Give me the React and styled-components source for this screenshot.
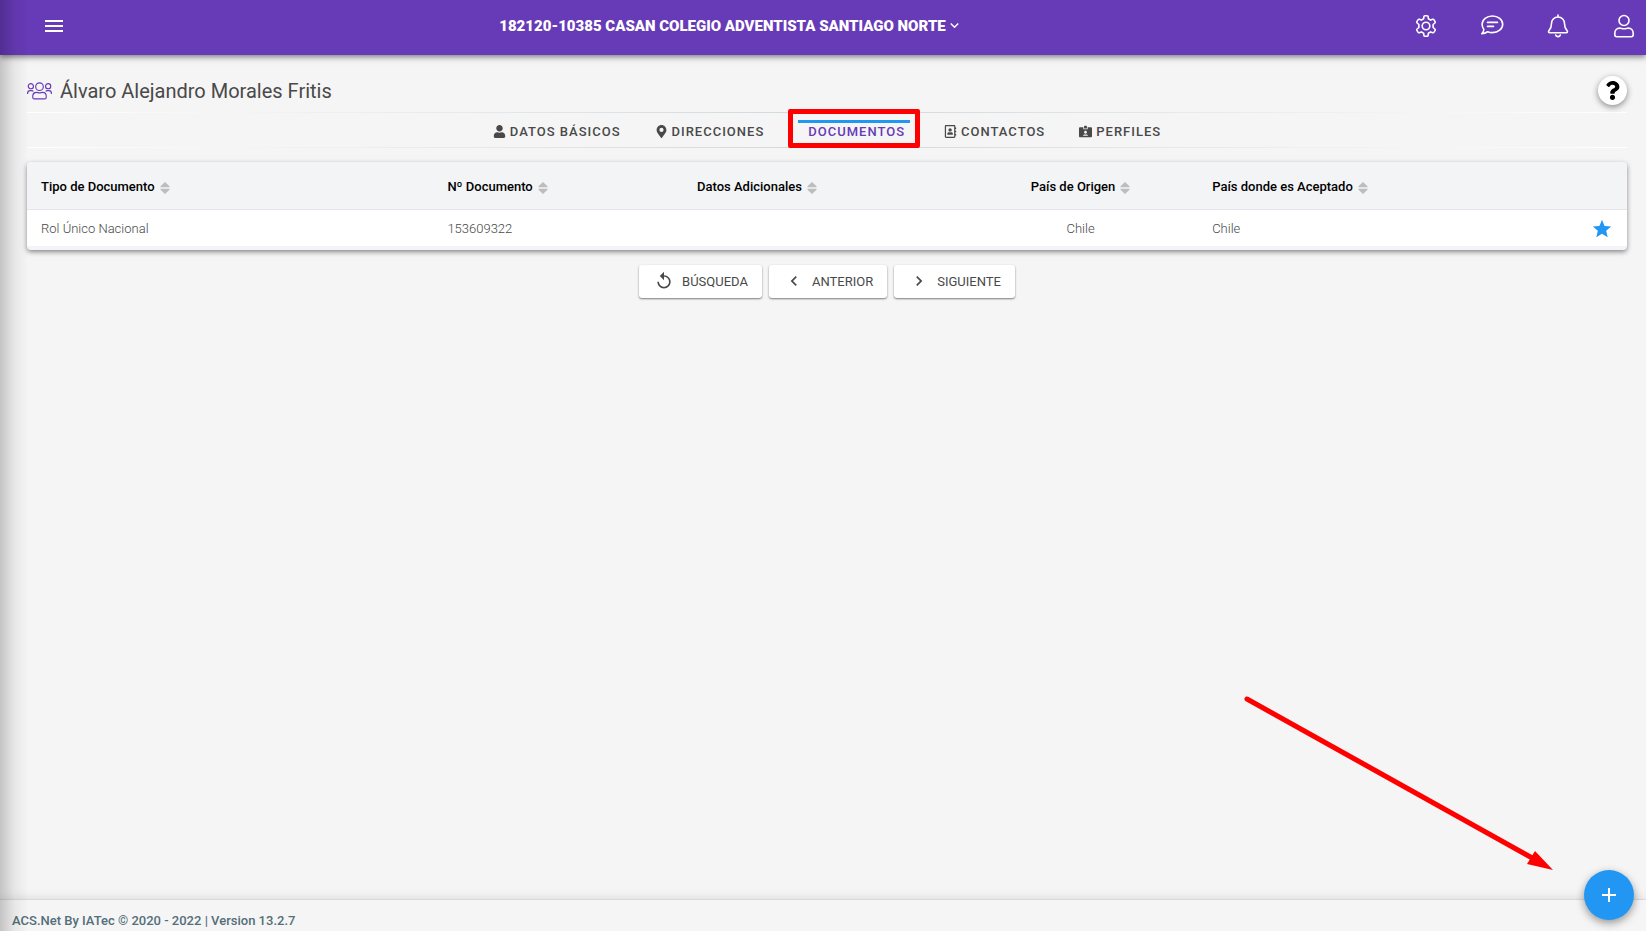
import { useState } from 'react'

// styled
import styled, { createGlobalStyle, ThemeProvider } from 'styled-components'

// icons
import {
  FaUser,
  FaMapMarkerAlt,
  FaRegAddressBook,
  FaIdCardAlt,
  FaQuestion,
} from 'react-icons/fa'
import {
  MdMenu,
  MdExpandMore,
  MdReplay,
  MdChevronLeft,
  MdChevronRight,
  MdAdd,
  MdStar,
} from 'react-icons/md'

const theme = {
  colors: {
    primary: '#673ab7',
    accent: '#2196f3',
    page: '#f5f5f5',
    text: '#494949',
    mark: '#ff0000',
  },
}

const tabs = [
  { id: 'datos', label: 'Datos Básicos', icon: FaUser },
  { id: 'direcciones', label: 'Direcciones', icon: FaMapMarkerAlt },
  { id: 'documentos', label: 'Documentos' },
  { id: 'contactos', label: 'Contactos', icon: FaRegAddressBook },
  { id: 'perfiles', label: 'Perfiles', icon: FaIdCardAlt },
]

const columns = [
  { key: 'tipo', label: 'Tipo de Documento', width: '25.4%' },
  { key: 'numero', label: 'Nº Documento', width: '15.6%' },
  { key: 'datos', label: 'Datos Adicionales', width: '17.5%' },
  { key: 'origen', label: 'País de Origen', width: '14.7%', align: 'center' },
  { key: 'aceptado', label: 'País donde es Aceptado', width: '17%' },
]

const documents = [
  {
    tipo: 'Rol Único Nacional',
    numero: '153609322',
    datos: '',
    origen: 'Chile',
    aceptado: 'Chile',
  },
]

function GearIcon() {
  return (
    <LineIcon viewBox="0 0 24 24">
      <circle cx="12" cy="12" r="3.8" />
      <path d="M9.900 2.600q.1-.9 1-.9h2.200q.9 0 1 .9l.3 2.200 2.200 1.300 2.100-.8q.8-.3 1.300.5l1.100 1.900q.4.8-.2 1.300l-1.800 1.500v3l1.800 1.500q.6.500.2 1.300l-1.100 1.900q-.5.800-1.300.5l-2.100-.8-2.200 1.300-.3 2.200q-.1.900-1 .9h-2.200q-.9 0-1-.9l-.3-2.200-2.200-1.300-2.100.8q-.8.300-1.300-.5l-1.100-1.900q-.4-.8.2-1.300l1.800-1.500v-3L3.100 9q-.6-.5-.2-1.300L4 5.800q.5-.8 1.300-.5l2.100.8 2.200-1.300z" />
    </LineIcon>
  )
}

function ChatIcon() {
  return (
    <LineIcon viewBox="0 0 24 24">
      <path d="M12.400 2c5.700 0 10.300 3.600 10.300 8.300s-4.600 8.300-10.300 8.300c-1.700 0-3.300-.3-4.700-.9-1.500 1.200-3.600 2-5.900 2 1.100-1.200 1.900-2.600 2.100-4.200-1.100-1.500-1.800-3.300-1.800-5.200 0-4.700 4.600-8.300 10.300-8.300z" />
      <path d="M7.500 8.400h10M7.500 12.400h6" />
    </LineIcon>
  )
}

function BellIcon() {
  return (
    <LineIcon viewBox="0 0 24 24">
      <path d="M12 1v2M12 3c-4 0-6.500 3-6.500 6.500 0 4.500-1.300 5.800-2.600 7.200-.8.900-.2 2 .9 2h16.400c1.100 0 1.700-1.100.9-2-1.300-1.400-2.600-2.700-2.600-7.200C18.500 6 16 3 12 3z" />
      <path d="M9.700 21c.3 1 1.200 1.600 2.300 1.600s2-.6 2.300-1.600" />
    </LineIcon>
  )
}

function PersonIcon() {
  return (
    <LineIcon viewBox="0 0 24 24">
      <circle cx="12" cy="6.500" r="5" />
      <path d="M7.800 14.100c1.500 0 2.200.7 4.200.7s2.700-.7 4.200-.7c3 0 5 2.300 5 5.100v1.600c0 1.100-.8 1.900-1.900 1.900H4.700c-1.100 0-1.900-.8-1.900-1.900v-1.600c0-2.800 2-5.100 5-5.100z" />
    </LineIcon>
  )
}

function PeopleIcon() {
  return (
    <PeopleSvg viewBox="0 0 26 20">
      <circle cx="13" cy="5.500" r="4" />
      <circle cx="4" cy="5" r="2.700" />
      <circle cx="22" cy="5" r="2.700" />
      <path d="M10 11.500c1 0 1.500.5 3 .5s2-.5 3-.5c2.500 0 4 1.700 4 4v1.200c0 .9-.6 1.500-1.500 1.500h-11c-.9 0-1.500-.6-1.500-1.500v-1.200c0-2.300 1.500-4 4-4z" />
      <path d="M.6 13v-.5c0-1.700 1-2.900 2.700-2.900h1.400c.8 0 1.400.2 1.900.7M25.400 13v-.5c0-1.700-1-2.900-2.700-2.900h-1.400c-.8 0-1.400.2-1.900.7" />
    </PeopleSvg>
  )
}

function SortIcon() {
  return (
    <SortSvg viewBox="0 0 10 12">
      <path d="M5 0l4.500 4.200v1H.5v-1zM5 12L.5 7.800v-1h9v1z" />
    </SortSvg>
  )
}

export default function App() {
  const [active, setActive] = useState('documentos')

  return (
    <ThemeProvider theme={theme}>
      <GlobalStyle />
      <Page>
        <Header>
          <IconButton aria-label="Menú">
            <MdMenu size={24} />
          </IconButton>
          <Entity>
            182120-10385 CASAN COLEGIO ADVENTISTA SANTIAGO NORTE
            <MdExpandMore size={17} />
          </Entity>
          <Actions>
            <IconButton aria-label="Configuración">
              <GearIcon />
            </IconButton>
            <IconButton aria-label="Mensajes">
              <ChatIcon />
            </IconButton>
            <IconButton aria-label="Notificaciones">
              <BellIcon />
            </IconButton>
            <IconButton aria-label="Cuenta">
              <PersonIcon />
            </IconButton>
          </Actions>
        </Header>

        <Main>
          <TitleBar>
            <PeopleIcon />
            <Title>Álvaro Alejandro Morales Fritis</Title>
            <Help aria-label="Ayuda">
              <FaQuestion size={19} />
            </Help>
          </TitleBar>

          <Tabs>
            {tabs.map(({ id, label, icon: Icon }) => (
              <Tab
                key={id}
                $active={id === active}
                onClick={() => setActive(id)}
              >
                {Icon && <Icon size={13} />}
                {label}
                {id === 'documentos' && <Highlight />}
              </Tab>
            ))}
          </Tabs>

          <Card>
            <Table>
              <thead>
                <tr>
                  {columns.map((col) => (
                    <Th key={col.key} $width={col.width} $align={col.align}>
                      {col.label}
                      <SortIcon />
                    </Th>
                  ))}
                  <Th />
                </tr>
              </thead>
              <tbody>
                {documents.map((doc) => (
                  <tr key={doc.numero}>
                    {columns.map((col) => (
                      <Td key={col.key} $align={col.align}>
                        {doc[col.key]}
                      </Td>
                    ))}
                    <Td $align="right">
                      <Star aria-label="Documento principal">
                        <MdStar size={22} />
                      </Star>
                    </Td>
                  </tr>
                ))}
              </tbody>
            </Table>
          </Card>

          <Pager>
            <PagerButton>
              <MdReplay size={20} />
              Búsqueda
            </PagerButton>
            <PagerButton>
              <MdChevronLeft size={20} />
              Anterior
            </PagerButton>
            <PagerButton>
              <MdChevronRight size={20} />
              Siguiente
            </PagerButton>
          </Pager>
        </Main>

        <Footer>ACS.Net By IATec © 2020 - 2022 | Version 13.2.7</Footer>

        <DrawerShadow />
        <Arrow viewBox="0 0 310 176">
          <path d="M3 3L290 163" />
          <polygon points="291,155 309,174 283,168" />
        </Arrow>
        <AddButton aria-label="Agregar">
          <MdAdd size={24} />
        </AddButton>
      </Page>
    </ThemeProvider>
  )
}

const GlobalStyle = createGlobalStyle`
  * {
    box-sizing: border-box;
  }
  body {
    margin: 0;
    background-color: ${theme.colors.page};
    color: ${theme.colors.text};
    font-family: Roboto, 'Liberation Sans', sans-serif;
    font-size: 13px;
  }
  button {
    padding: 0;
    border: 0;
    background: none;
    color: inherit;
    font: inherit;
    cursor: pointer;
  }
`
const Page = styled.div`
  display: flex;
  flex-direction: column;
  min-height: 100vh;
`
const Header = styled.header`
  display: grid;
  grid-template-columns: 1fr auto 1fr;
  align-items: center;
  height: 55px;
  padding: 0 10px 4px 42px;
  background-color: ${({ theme }) => theme.colors.primary};
  color: #fff;
  box-shadow: 0 2px 6px rgba(0, 0, 0, 0.5);
`
const IconButton = styled.button`
  display: flex;
  width: 24px;
`
const Entity = styled.button`
  display: flex;
  align-items: center;
  margin-right: 216px;
  font-size: 15px;
  font-weight: 900;
`
const Actions = styled.div`
  display: flex;
  justify-content: flex-end;
  gap: 42px;
`
const LineIcon = styled.svg`
  width: 24px;
  height: 24px;
  fill: none;
  stroke: #fff;
  stroke-width: 1.6;
  stroke-linejoin: round;
  stroke-linecap: round;
`
const Main = styled.main`
  flex: 1;
  padding: 18px 19px 0 27px;
`
const TitleBar = styled.div`
  display: flex;
  align-items: center;
  height: 39px;
  padding-bottom: 4px;
`
const PeopleSvg = styled.svg`
  width: 25px;
  height: 20px;
  margin-right: 8px;
  fill: none;
  stroke: ${({ theme }) => theme.colors.primary};
  stroke-width: 1.2;
`
const Title = styled.h1`
  flex: 1;
  margin: 0;
  font-size: 20px;
  font-weight: 400;
`
const Help = styled.button`
  display: flex;
  align-items: center;
  justify-content: center;
  width: 29px;
  height: 29px;
  border-radius: 50%;
  background-color: #fff;
  color: #000;
  box-shadow: 0 2px 6px rgba(0, 0, 0, 0.45);
`
const Tabs = styled.nav`
  display: flex;
  justify-content: center;
  gap: 34px;
  height: 36px;
  border: solid;
  border-width: 1px 0;
  border-image: linear-gradient(to right, #fff, #cfd8dc 50%, #fff) 1;
`
const Tab = styled.button`
  position: relative;
  display: flex;
  align-items: center;
  gap: 4px;
  height: 26px;
  margin-top: 7px;
  padding: ${({ $active }) => ($active ? '0 5px 6px 10px' : '0 0 6px')};
  border-top: ${({ $active, theme }) =>
    `3px solid ${$active ? theme.colors.accent : 'transparent'}`};
  color: ${({ $active, theme }) =>
    $active ? theme.colors.primary : theme.colors.text};
  font-weight: 500;
  letter-spacing: 1px;
  text-transform: uppercase;
`
const Highlight = styled.span`
  position: absolute;
  inset: -14px -10px -2px;
  border: 5px solid ${({ theme }) => theme.colors.mark};
  border-radius: 2px;
`
const Card = styled.section`
  margin-top: 14px;
  padding-bottom: 4px;
  overflow: hidden;
  border-radius: 4px;
  background-color: #f3f4f8;
  box-shadow: 0 2px 5px rgba(0, 0, 0, 0.45);
`
const Table = styled.table`
  width: 100%;
  border-spacing: 0;
  table-layout: fixed;
`
const Th = styled.th`
  width: ${({ $width }) => $width || 'auto'};
  height: 48px;
  padding: 2px 14px 0;
  border-bottom: 1px solid #e4e5ec;
  background-color: #f3f4f6;
  color: #000;
  font-weight: 500;
  text-align: ${({ $align }) => $align || 'left'};
  white-space: nowrap;
`
const SortSvg = styled.svg`
  width: 10px;
  height: 12px;
  margin-left: 5px;
  vertical-align: middle;
  fill: #bdbdbd;
`
const Td = styled.td`
  height: 36px;
  padding: 0 14px;
  background-color: #fff;
  font-weight: 300;
  text-align: ${({ $align }) => $align || 'left'};
`
const Star = styled.button`
  display: inline-flex;
  padding-top: 2px;
  color: ${({ theme }) => theme.colors.accent};
  vertical-align: middle;
`
const Pager = styled.div`
  display: flex;
  justify-content: center;
  gap: 7px;
  margin-top: 15px;
`
const PagerButton = styled.button`
  display: flex;
  align-items: center;
  gap: 8px;
  height: 33px;
  padding: 0 14px 1px 15px;
  border-radius: 3px;
  background-color: #fff;
  text-transform: uppercase;
  box-shadow: 0 1px 2px rgba(0, 0, 0, 0.5);
`
const Footer = styled.footer`
  height: 32px;
  padding: 0 12px;
  border-top: 1px solid #d8d8e0;
  color: #546e7a;
  font-weight: 500;
  line-height: 42px;
  box-shadow: 0 0 12px rgba(0, 0, 0, 0.12);
  clip-path: inset(-14px 0 0);
`
const DrawerShadow = styled.div`
  position: fixed;
  inset: 0 auto 0 0;
  width: 28px;
  background: linear-gradient(
    to right,
    rgba(0, 0, 0, 0.2),
    rgba(0, 0, 0, 0.06) 50%,
    transparent
  );
  pointer-events: none;
`
const Arrow = styled.svg`
  position: fixed;
  right: 92px;
  bottom: 59px;
  width: 310px;
  height: 176px;
  fill: ${({ theme }) => theme.colors.mark};
  stroke-width: 5;
  stroke-linecap: round;
  pointer-events: none;

  path {
    stroke: ${({ theme }) => theme.colors.mark};
  }
`
const AddButton = styled.button`
  position: fixed;
  right: 12px;
  bottom: 11px;
  display: flex;
  align-items: center;
  justify-content: center;
  width: 50px;
  height: 50px;
  border-radius: 50%;
  background-color: ${({ theme }) => theme.colors.accent};
  color: #fff;
  box-shadow: 0 3px 8px rgba(0, 0, 0, 0.4);
`
